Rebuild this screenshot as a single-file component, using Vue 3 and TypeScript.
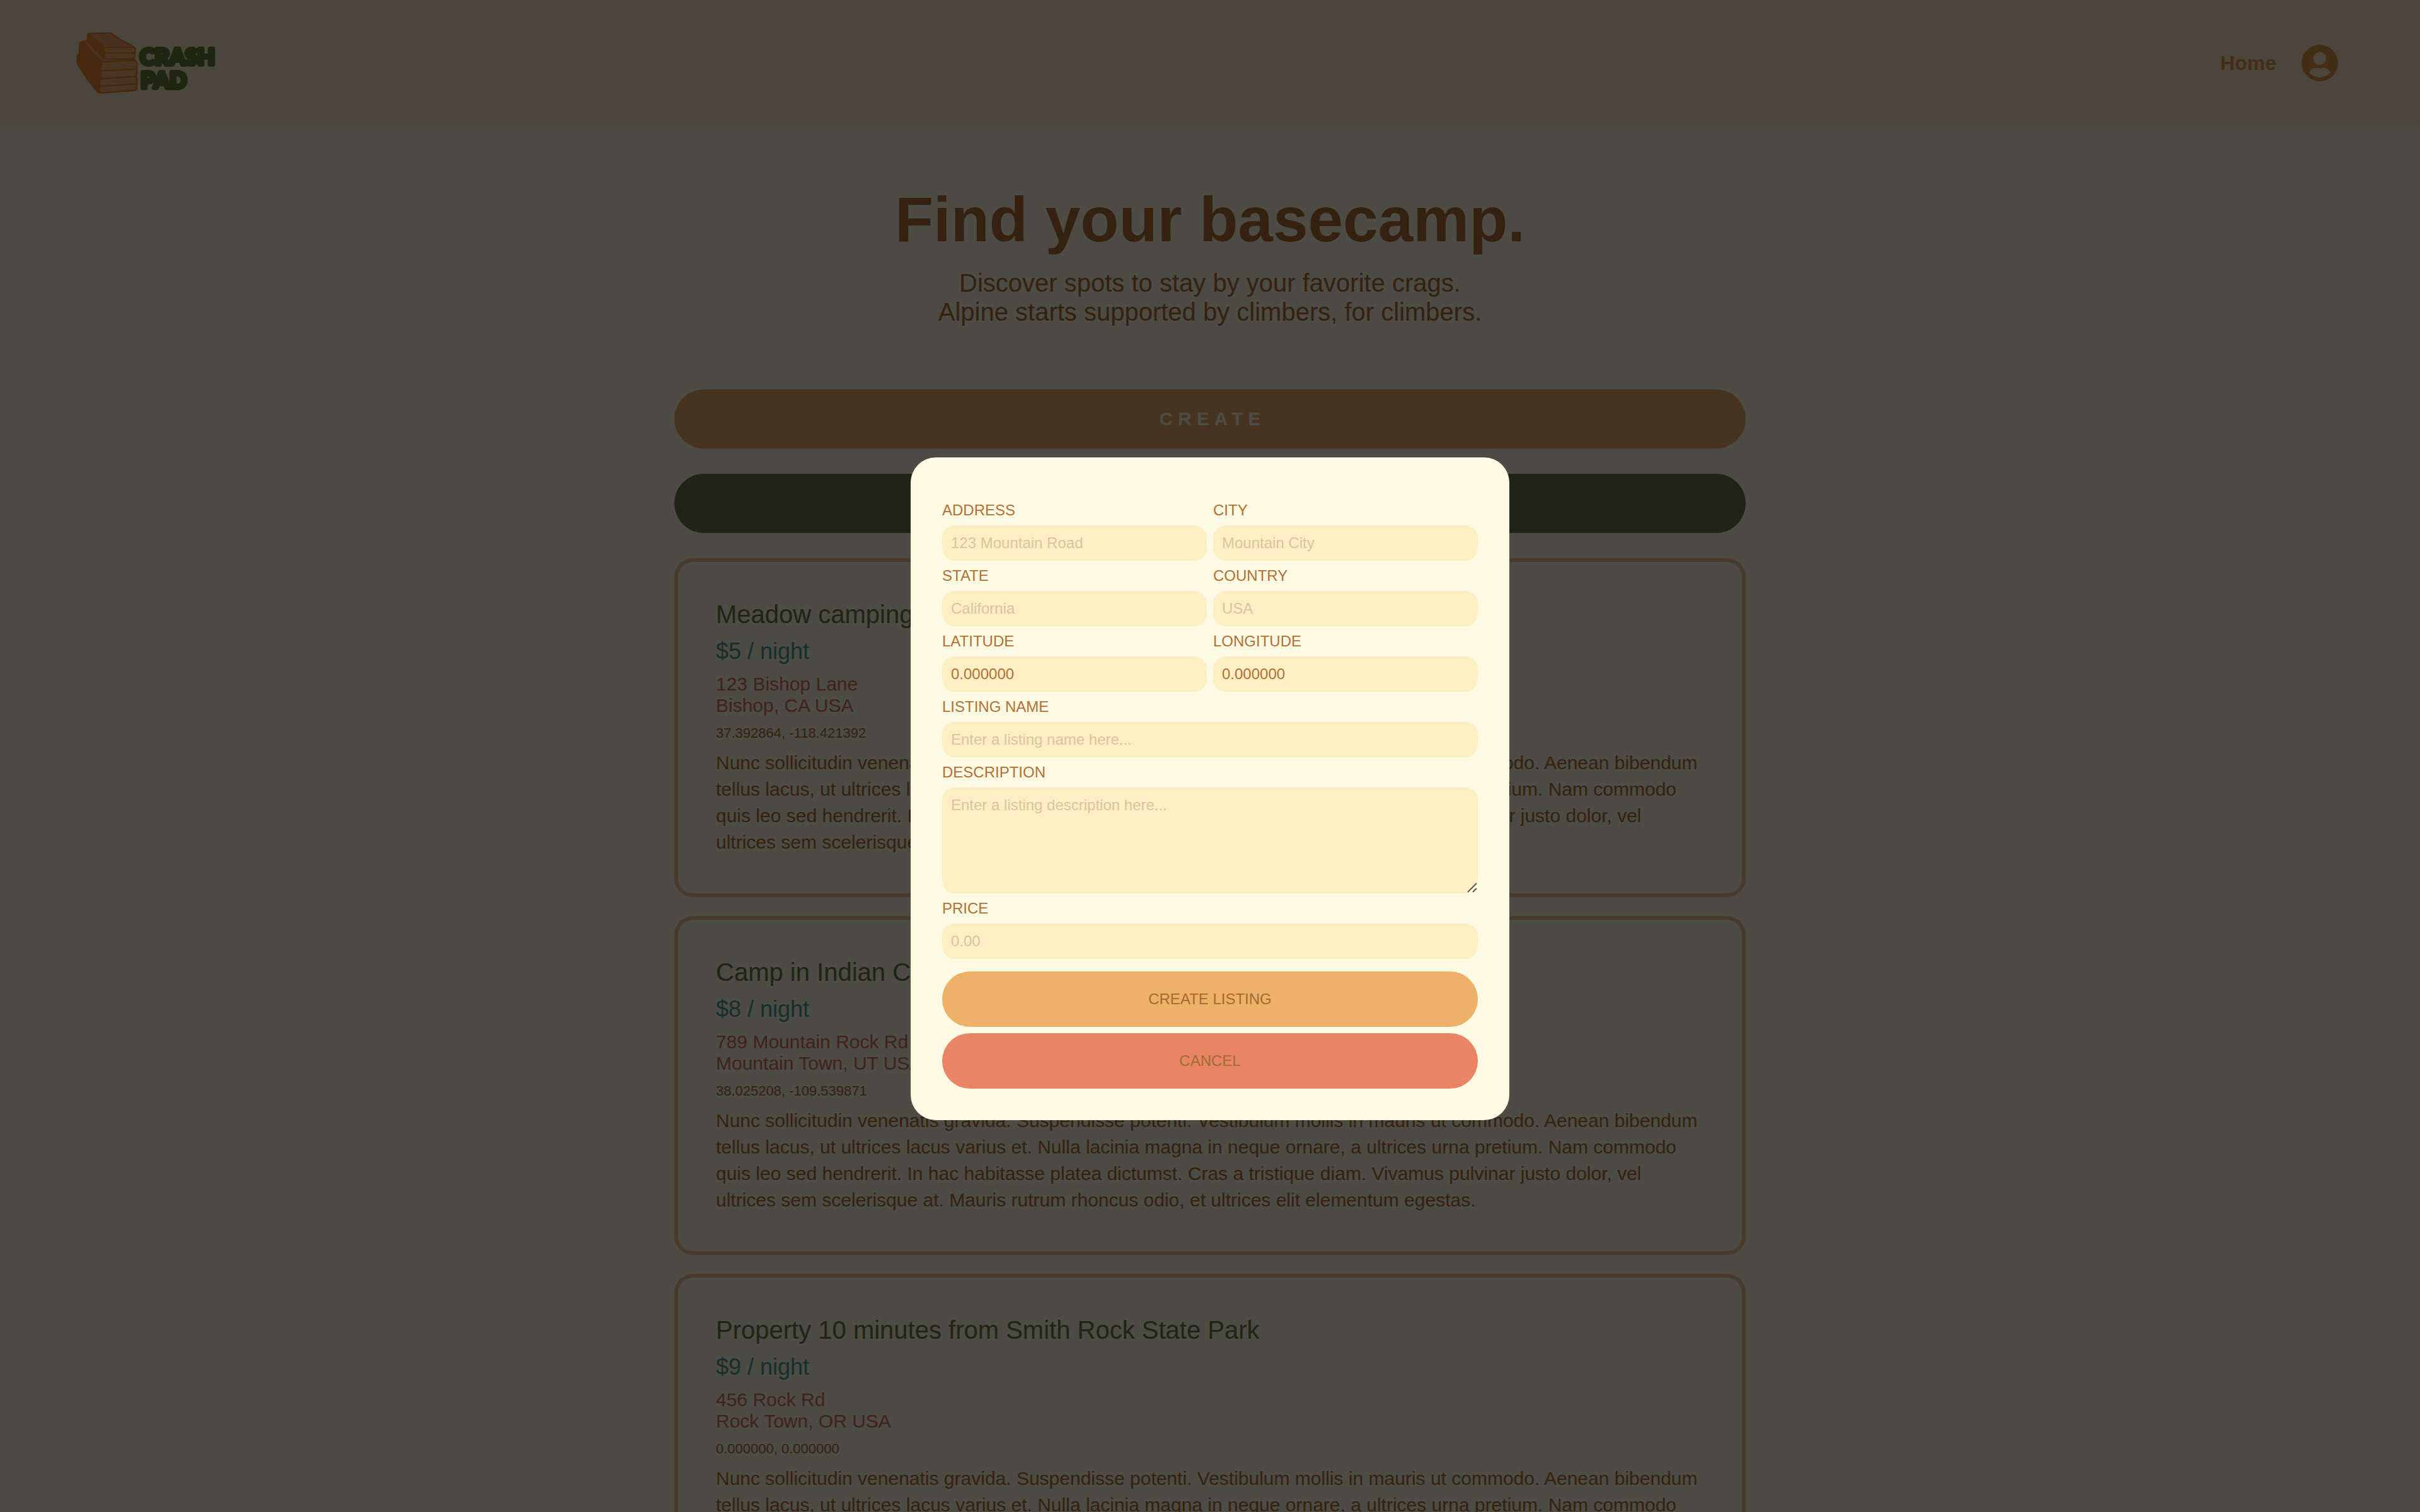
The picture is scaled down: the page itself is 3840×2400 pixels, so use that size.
<script setup lang="ts">
import { ref } from 'vue'

interface Listing {
  title: string
  price: number
  street: string
  region: string
  coords: string
}

const blurb =
  'Nunc sollicitudin venenatis gravida. Suspendisse potenti. Vestibulum mollis in mauris ut commodo. Aenean bibendum tellus lacus, ut ultrices lacus varius et. Nulla lacinia magna in neque ornare, a ultrices urna pretium. Nam commodo quis leo sed hendrerit. In hac habitasse platea dictumst. Cras a tristique diam. Vivamus pulvinar justo dolor, vel ultrices sem scelerisque at. Mauris rutrum rhoncus odio, et ultrices elit elementum egestas.'

const listings: Listing[] = [
  { title: 'Meadow camping', price: 5, street: '123 Bishop Lane', region: 'Bishop, CA USA', coords: '37.392864, -118.421392' },
  { title: 'Camp in Indian Creek', price: 8, street: '789 Mountain Rock Rd', region: 'Mountain Town, UT USA', coords: '38.025208, -109.539871' },
  { title: 'Property 10 minutes from Smith Rock State Park', price: 9, street: '456 Rock Rd', region: 'Rock Town, OR USA', coords: '0.000000, 0.000000' },
]

const form = ref({
  address: '',
  city: '',
  state: '',
  country: '',
  latitude: '0.000000',
  longitude: '0.000000',
  name: '',
  description: '',
  price: '',
})
</script>

<template>
  <div class="page">
    <header class="header">
      <a href="#" class="logo-link" aria-label="Crash Pad">
        <svg class="logo" viewBox="60 60 672 300">
          <path
            class="pad-dark"
            d="M124 66 L222 64 Q232 64 240 72 L262 88 L338 130 Q347 136 347 146 L344 180 Q343 190 346 194 Q354 200 355 212 L356 262 Q354 272 352 276 Q356 282 356 290 L355 332 Q353 343 340 344 L182 356 Q166 356 158 346 L110 286 L68 220 Q63 212 64 202 L64 178 Q66 168 74 166 L76 118 Q78 108 90 106 L114 100 L114 76 Q114 66 124 66 Z"
          />
          <path class="pad-top" d="M132 73 L220 71 Q230 71 238 79 L326 133 L204 132 Q198 133 193 128 Z" />
          <path class="pad-top" d="M100 110 L114 108 Q120 122 190 184 Q196 190 206 192 L334 196 L190 202 Q180 202 172 192 Z" />
          <path class="pad-side" d="M200 139 L334 139 Q342 140 341 148 L340 158 L200 158 Z" />
          <path class="pad-side" d="M200 166 L340 166 L338 180 Q336 186 328 186 L202 188 Z" />
          <path class="pad-side" d="M188 208 L340 200 Q348 200 349 210 L348 236 L184 243 Z" />
          <path class="pad-side" d="M184 250 L348 243 L348 260 Q346 270 336 271 L192 280 Q182 280 180 270 Z" />
          <path class="pad-side" d="M182 290 L338 278 Q347 278 348 288 L347 306 L177 317 Q176 292 182 290 Z" />
          <path class="pad-side" d="M177 325 L347 313 L347 328 Q346 336 336 337 L190 348 Q177 349 176 342 Z" />
          <text class="logo-text" x="366" y="219">CRASH</text>
          <text class="logo-text" x="370" y="331">PAD</text>
        </svg>
      </a>
      <nav class="nav">
        <a href="#" class="nav-link">Home</a>
        <button type="button" class="avatar" aria-label="Account">
          <svg viewBox="2 2 20 20">
            <path
              fill-rule="evenodd"
              d="M12 2a10 10 0 1 0 0 20 10 10 0 1 0 0-20zM12 6a3.5 3.5 0 1 1 0 7 3.500 3.500 0 1 1 0-7zM6.200 17.100C7.100 15.700 8.600 14.600 10 14.600 10.900 14.600 11.300 14.900 12 14.900 12.700 14.900 13.100 14.600 14 14.600 15.400 14.600 16.900 15.700 17.800 17.100 16.400 18.800 14.300 19.900 12 19.900 9.700 19.900 7.600 18.800 6.200 17.100z"
            />
          </svg>
        </button>
      </nav>
    </header>

    <main class="main">
      <section class="hero">
        <h1>Find your basecamp.</h1>
        <p>Discover spots to stay by your favorite crags.<br />Alpine starts supported by climbers, for climbers.</p>
      </section>
      <div class="actions">
        <button type="button" class="wide wide-create">CREATE</button>
        <button type="button" class="wide wide-map" aria-label="Map"></button>
      </div>
      <div class="listings">
        <article v-for="item in listings" :key="item.title" class="card">
          <h2>{{ item.title }}</h2>
          <p class="price">${{ item.price }} / night</p>
          <p class="address">{{ item.street }}<br />{{ item.region }}</p>
          <p class="coords">{{ item.coords }}</p>
          <p class="blurb">{{ blurb }}</p>
        </article>
      </div>
    </main>

    <div class="overlay">
      <form class="modal" role="dialog" aria-label="Create listing" @submit.prevent>
        <div class="field">
          <label for="address">ADDRESS</label>
          <input id="address" v-model="form.address" type="text" placeholder="123 Mountain Road" />
        </div>
        <div class="field">
          <label for="city">CITY</label>
          <input id="city" v-model="form.city" type="text" placeholder="Mountain City" />
        </div>
        <div class="field">
          <label for="state">STATE</label>
          <input id="state" v-model="form.state" type="text" placeholder="California" />
        </div>
        <div class="field">
          <label for="country">COUNTRY</label>
          <input id="country" v-model="form.country" type="text" placeholder="USA" />
        </div>
        <div class="field">
          <label for="latitude">LATITUDE</label>
          <input id="latitude" v-model="form.latitude" type="text" />
        </div>
        <div class="field">
          <label for="longitude">LONGITUDE</label>
          <input id="longitude" v-model="form.longitude" type="text" />
        </div>
        <div class="field full">
          <label for="name">LISTING NAME</label>
          <input id="name" v-model="form.name" type="text" placeholder="Enter a listing name here..." />
        </div>
        <div class="field full">
          <label for="description">DESCRIPTION</label>
          <div class="area">
            <textarea id="description" v-model="form.description" placeholder="Enter a listing description here..."></textarea>
            <svg class="grip" viewBox="0 0 16 16" aria-hidden="true">
              <path class="grip-light" d="M3 16 L16 3 M11 16 L16 11" />
              <path class="grip-dark" d="M1 15 L15 1 M9 15 L15 9" />
            </svg>
          </div>
        </div>
        <div class="field full">
          <label for="price">PRICE</label>
          <input id="price" v-model="form.price" type="text" placeholder="0.00" />
        </div>
        <div class="buttons full">
          <button type="submit" class="submit">CREATE LISTING</button>
          <button type="button" class="cancel">CANCEL</button>
        </div>
      </form>
    </div>
  </div>
</template>

<style>
body {
  overflow: hidden;
  background: #fdfae3;
}
</style>

<style scoped>
.page {
  min-height: 100vh;
  background: #fdfae3;
  color: #b37034;
  font-family: Helvetica, 'Liberation Sans', Arial, sans-serif;
}
.page * {
  box-sizing: border-box;
}
button,
input,
textarea {
  border: 0;
  font-family: inherit;
  outline: none;
}
h1,
h2,
p {
  margin: 0;
}
.header {
  display: flex;
  align-items: center;
  justify-content: space-between;
  height: 200px;
  padding: 0 130px 0 120px;
  background: #fbecc8;
}
.logo {
  display: block;
  width: 224px;
  height: 100px;
}
.pad-dark {
  fill: #e98535;
}
.pad-top {
  fill: #f0a26e;
}
.pad-side {
  fill: #f5b17b;
}
.logo-text {
  fill: #677c38;
  stroke: #677c38;
  stroke-width: 18px;
  stroke-linejoin: round;
  font-family: Lato, sans-serif;
  font-size: 107px;
  font-weight: 900;
}
.nav {
  display: flex;
  align-items: center;
  gap: 40px;
}
.nav-link {
  color: #e5984e;
  font-size: 32px;
  font-weight: 700;
  line-height: 36px;
  text-decoration: none;
}
.avatar {
  width: 58px;
  height: 58px;
  padding: 0;
  background: none;
}
.avatar svg {
  display: block;
  width: 58px;
  height: 58px;
  fill: #e5984e;
}
.main {
  width: 100%;
  max-width: 1700px;
  margin: 0 auto;
  padding-top: 90px;
}
.hero {
  text-align: center;
}
h1 {
  font-size: 100px;
  line-height: 116px;
}
.hero p {
  margin-top: 20px;
  font-size: 40px;
  line-height: 46px;
}
.actions {
  display: flex;
  flex-direction: column;
  gap: 40px;
  margin: 100px 0 40px;
}
.wide {
  height: 94px;
  border-radius: 47px;
  color: #fdfae3;
  font-size: 30px;
  font-weight: 700;
  letter-spacing: 8px;
  text-indent: 8px;
}
.wide-create {
  background: #ecb06e;
}
.wide-map {
  background: #70764a;
}
.listings {
  display: flex;
  flex-direction: column;
  gap: 30px;
}
.card {
  display: flex;
  flex-direction: column;
  gap: 15px;
  padding: 60px;
  border: 6px solid #f4c592;
  border-radius: 30px;
}
h2 {
  color: #6e7844;
  font-size: 40px;
  font-weight: 400;
  line-height: 46px;
}
.price {
  color: #4c9f9c;
  font-size: 36px;
  line-height: 41px;
}
.address {
  color: #d97060;
  font-size: 30px;
  line-height: 34px;
}
.coords {
  font-size: 22px;
  line-height: 23px;
}
.blurb {
  font-size: 30px;
  line-height: 42px;
}
.overlay {
  position: fixed;
  inset: 0;
  display: flex;
  align-items: center;
  justify-content: center;
  padding-top: 104px;
  background: rgba(0, 0, 0, 0.7);
}
.modal {
  display: grid;
  grid-template-columns: 1fr 1fr;
  column-gap: 10px;
  width: 100%;
  max-width: 950px;
  padding: 60px 50px 50px;
  border-radius: 40px;
  background: #fdfae3;
}
.full {
  grid-column: 1 / -1;
}
.field {
  display: flex;
  flex-direction: column;
}
label {
  padding: 10px 0;
  font-size: 24px;
  line-height: 28px;
}
input,
textarea {
  width: 100%;
  padding: 14px;
  border-radius: 20px;
  background: #fdefc3;
  color: #b37034;
  font-size: 24px;
  line-height: 28px;
}
input {
  height: 56px;
}
textarea {
  display: block;
  height: 168px;
  resize: none;
}
input::placeholder,
textarea::placeholder {
  color: #dcc49f;
  opacity: 1;
}
.area {
  position: relative;
}
.grip {
  position: absolute;
  right: 1px;
  bottom: 1px;
  width: 16px;
  height: 16px;
  fill: none;
  stroke-width: 2;
}
.grip-dark {
  stroke: #5d5848;
}
.grip-light {
  stroke: #fffdf4;
}
.buttons {
  display: flex;
  flex-direction: column;
  gap: 10px;
  margin-top: 20px;
}
.buttons button {
  height: 88px;
  border-radius: 44px;
  font-size: 24px;
}
.submit {
  background: #eeb169;
  color: #a56a33;
}
.cancel {
  background: #e98565;
  color: #a16c33;
}
</style>
